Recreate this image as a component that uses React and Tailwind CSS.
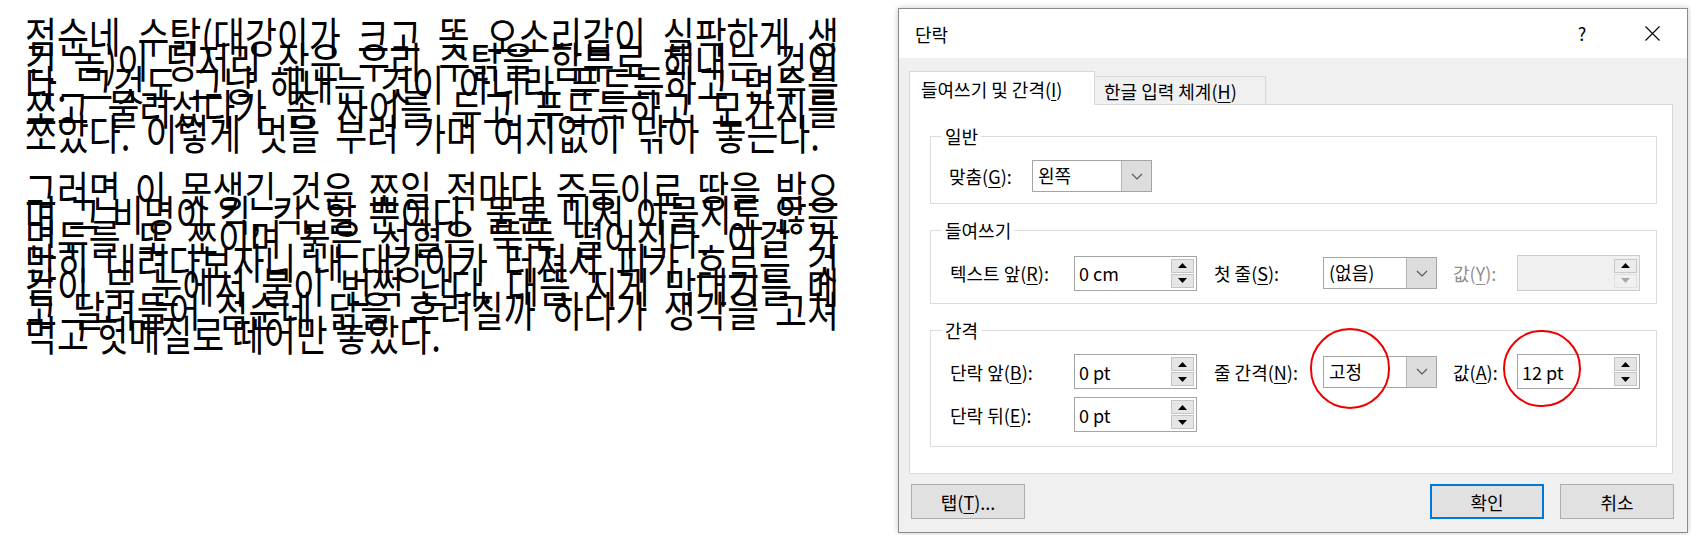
import React from "react";

const para1 = [
  "점순네 수탉(대강이가 크고 똑 오소리같이 실팍하게 생",
  "긴 놈)이 덩저리 작은 우리 수탉을 함부로 해내는 것이",
  "다. 그것도 그냥 해내는 것이 아니라 푸드득하고 면두를",
  "쪼고 물러섰다가 좀 사이를 두고 푸드득하고 모가지를",
];
const para1Last = "쪼았다. 이렇게 멋을 부려 가며 여지없이 닦아 놓는다.";
const para2 = [
  "그러면 이 못생긴 것은 쪼일 적마다 주둥이로 땅을 받으",
  "며 그 비명이 킥, 킥, 할 뿐이다. 물론 미처 아물지도 않은",
  "면두를 또 쪼이며 붉은 선혈은 뚝뚝 떨어진다. 이걸 가",
  "만히 내려다보자니 내 대강이가 터져서 피가 흐르는 것",
  "같이 두 눈에서 불이 번쩍 난다. 대뜸 지게 막대기를 메",
  "고 달려들어 점순네 닭을 후려칠까 하다가 생각을 고쳐",
];
const para2Last = "먹고 헛매질로 떼어만 놓았다.";

function Line({ text, short }) {
  return (
    <div
      className={
        short
          ? "flex h-[19.67px] w-[795px] justify-between whitespace-nowrap leading-[19.67px]"
          : "flex h-[19.67px] w-[814px] justify-between whitespace-nowrap leading-[19.67px]"
      }
    >
      {text.split(" ").map((w, i) => (
        <span key={i}>{w}</span>
      ))}
    </div>
  );
}

function Up({ color = "#000" }) {
  return (
    <svg width="9" height="5" viewBox="0 0 9 5">
      <path d="M0 5 L4.5 0 L9 5 Z" fill={color} />
    </svg>
  );
}
function Down({ color = "#000" }) {
  return (
    <svg width="9" height="5" viewBox="0 0 9 5">
      <path d="M0 0 L4.5 5 L9 0 Z" fill={color} />
    </svg>
  );
}

function Spin({ value }) {
  return (
    <div className="flex h-[35px] w-[123px] items-center border border-[#a5a5a5] bg-white pl-[4px] pr-[2px]">
      <span className="flex-1 text-[18px] leading-[20px] text-black">{value}</span>
      <div className="flex w-[23px] flex-col gap-[1px]">
        <div className="flex h-[14px] items-center justify-center border border-[#c4c4c4] bg-[#e5e5e5]">
          <Up />
        </div>
        <div className="flex h-[14px] items-center justify-center border border-[#c4c4c4] bg-[#e5e5e5]">
          <Down />
        </div>
      </div>
    </div>
  );
}

function SpinDisabled() {
  return (
    <div className="flex h-[36px] w-[123px] items-center border border-[#cccccc] bg-[#f0f0f0] pl-[4px] pr-[2px]">
      <span className="flex-1" />
      <div className="flex w-[23px] flex-col gap-[1px]">
        <div className="flex h-[14px] items-center justify-center border border-[#c8c8c8] bg-[#ececec]">
          <Up />
        </div>
        <div className="flex h-[14px] items-center justify-center border border-[#e0e0e0] bg-[#f0f0f0]">
          <Down color="#a8a8a8" />
        </div>
      </div>
    </div>
  );
}

function Chevron() {
  return (
    <svg width="12" height="7" viewBox="0 0 12 7">
      <path d="M1 1 L6 6 L11 1" fill="none" stroke="#555" strokeWidth="1.1" />
    </svg>
  );
}

function Combo({ value, w = "w-[114px]" }) {
  return (
    <div className={`flex h-[32px] ${w} border border-[#a5a5a5] bg-white`}>
      <span className="flex-1 pl-[5px] text-[18px] leading-[28px] text-black">{value}</span>
      <div className="flex w-[30px] items-center justify-center border-l border-[#b5b5b5] bg-[#dddddd]">
        <Chevron />
      </div>
    </div>
  );
}

function U({ children }) {
  return <span className="underline decoration-1 underline-offset-[3px]">{children}</span>;
}

function Group({ title, h, children, className = "" }) {
  return (
    <div className={`relative ml-[20px] w-[727px] border border-[#dcdcdc] ${h} ${className}`}>
      <span className="absolute left-[11px] top-[-13px] bg-white px-[3px] text-[18px] leading-[24px] text-black">
        {title}
      </span>
      {children}
    </div>
  );
}

export default function App() {
  return (
    <div className="flex h-[535px] w-[1691px] overflow-hidden bg-white font-['Noto_Sans_CJK_KR',sans-serif] text-black">
      {/* document text */}
      <div className="w-[898px] shrink-0 pl-[25px] pt-[24px]">
        <div className="origin-top-left scale-y-[1.22] text-[34.7px]">
          {para1.map((l, i) => (
            <Line key={i} text={l} />
          ))}
          <Line text={para1Last} short />
          <div className="h-[27.7px]" />
          {para2.map((l, i) => (
            <Line key={i} text={l} />
          ))}
          <div className="h-[19.67px] whitespace-nowrap leading-[19.67px]">{para2Last}</div>
        </div>
      </div>

      {/* dialog */}
      <div className="mt-[8px] flex h-[525px] w-[790px] shrink-0 flex-col border border-[#8b8b8b] bg-[#f0f0f0] shadow-[0_0_6px_rgba(0,0,0,0.22)]">
        {/* title bar */}
        <div className="flex h-[49px] items-center bg-white">
          <span className="flex-1 pl-[16px] text-[18px] leading-[24px]">단락</span>
          <div className="flex h-full w-[70px] items-center justify-center text-[18px]">?</div>
          <div className="flex h-full w-[70px] items-center justify-center">
            <svg width="15" height="15" viewBox="0 0 15 15">
              <path d="M0.5 0.5 L14.5 14.5 M14.5 0.5 L0.5 14.5" stroke="#000" strokeWidth="1.1" />
            </svg>
          </div>
        </div>

        <div className="flex flex-1 flex-col px-[10px] pt-[13px]">
          {/* tabs */}
          <div className="flex h-[33px] items-end">
            <div className="relative z-10 -mb-px flex h-[34px] w-[186px] items-center border-x border-t border-[#d9d9d9] bg-white pl-[11px] text-[18px] leading-[24px]">
              들여쓰기 및 간격(<U>I</U>)
            </div>
            <div className="flex h-[28px] w-[171px] items-center border-r border-t border-[#d9d9d9] bg-[#f0f0f0] pl-[9px] text-[18px] leading-[24px]">
              한글 입력 체계(<U>H</U>)
            </div>
          </div>

          {/* tab page */}
          <div className="h-[370px] w-[764px] border border-[#d9d9d9] bg-white pt-[31px]">
            <Group title="일반" h="h-[68px]">
              <div className="flex items-center pl-[18px] pt-[23px]">
                <span className="w-[83px] text-[18px] leading-[24px]">
                  맞춤(<U>G</U>):
                </span>
                <Combo value="왼쪽" w="w-[120px]" />
              </div>
            </Group>

            <Group title="들여쓰기" h="h-[74px]" className="mt-[26px]">
              <div className="flex items-center pl-[19px] pt-[24px]">
                <span className="w-[124px] text-[18px] leading-[24px]">
                  텍스트 앞(<U>R</U>):
                </span>
                <Spin value="0 cm" />
                <span className="ml-[17px] w-[109px] text-[18px] leading-[24px]">
                  첫 줄(<U>S</U>):
                </span>
                <Combo value="(없음)" />
                <span className="ml-[16px] w-[64px] text-[18px] leading-[24px] text-[#8f8f8f]">
                  값(<U>Y</U>):
                </span>
                <SpinDisabled />
              </div>
            </Group>

            <Group title="간격" h="h-[117px]" className="mt-[26px]">
              <div className="flex items-center pl-[19px] pt-[23px]">
                <span className="w-[124px] text-[18px] leading-[24px]">
                  단락 앞(<U>B</U>):
                </span>
                <Spin value="0 pt" />
                <span className="ml-[17px] w-[109px] text-[18px] leading-[24px]">
                  줄 간격(<U>N</U>):
                </span>
                <div className="relative">
                  <Combo value="고정" />
                  <div className="pointer-events-none absolute left-[-13px] top-[-28px] h-[81px] w-[80px] rounded-full border-2 border-[#ee0000]" />
                </div>
                <span className="ml-[16px] w-[64px] text-[18px] leading-[24px]">
                  값(<U>A</U>):
                </span>
                <div className="relative">
                  <Spin value="12 pt" />
                  <div className="pointer-events-none absolute left-[-14px] top-[-24px] h-[77px] w-[78px] rounded-full border-2 border-[#ee0000]" />
                </div>
              </div>
              <div className="mt-[8px] flex items-center pl-[19px]">
                <span className="w-[124px] text-[18px] leading-[24px]">
                  단락 뒤(<U>E</U>):
                </span>
                <Spin value="0 pt" />
              </div>
            </Group>
          </div>

          {/* buttons */}
          <div className="mt-[10px] flex w-[766px] items-center">
            <button className="ml-[2px] flex h-[35px] w-[114px] items-center justify-center border border-[#adadad] bg-[#e1e1e1] text-[18px] leading-[24px]">
              탭(<U>T</U>)...
            </button>
            <div className="flex-1" />
            <button className="flex h-[35px] w-[114px] items-center justify-center border-2 border-[#0078d7] bg-[#e1e1e1] text-[18px] leading-[24px]">
              확인
            </button>
            <button className="ml-[16px] mr-[1px] flex h-[35px] w-[114px] items-center justify-center border border-[#adadad] bg-[#e1e1e1] text-[18px] leading-[24px]">
              취소
            </button>
          </div>
        </div>
      </div>
    </div>
  );
}
